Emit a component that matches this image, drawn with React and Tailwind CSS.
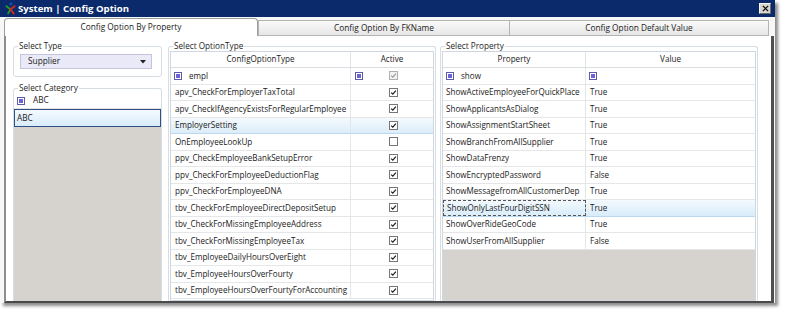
import React from 'react';

const optionTypes = [
  { name: 'apv_CheckForEmployerTaxTotal', on: true },
  { name: 'apv_CheckIfAgencyExistsForRegularEmployee', on: true },
  { name: 'EmployerSetting', on: true, sel: true },
  { name: 'OnEmployeeLookUp', on: false },
  { name: 'ppv_CheckEmployeeBankSetupError', on: true },
  { name: 'ppv_CheckForEmployeeDeductionFlag', on: true },
  { name: 'ppv_CheckForEmployeeDNA', on: true },
  { name: 'tbv_CheckForEmployeeDirectDepositSetup', on: true },
  { name: 'tbv_CheckForMissingEmployeeAddress', on: true },
  { name: 'tbv_CheckForMissingEmployeeTax', on: true },
  { name: 'tbv_EmployeeDailyHoursOverEight', on: true },
  { name: 'tbv_EmployeeHoursOverFourty', on: true },
  { name: 'tbv_EmployeeHoursOverFourtyForAccounting', on: true },
];

const properties = [
  ['ShowActiveEmployeeForQuickPlace', 'True'],
  ['ShowApplicantsAsDialog', 'True'],
  ['ShowAssignmentStartSheet', 'True'],
  ['ShowBranchFromAllSupplier', 'True'],
  ['ShowDataFrenzy', 'True'],
  ['ShowEncryptedPassword', 'False'],
  ['ShowMessagefromAllCustomerDep', 'True'],
  ['ShowOnlyLastFourDigitSSN', 'True', true],
  ['ShowOverRideGeoCode', 'True'],
  ['ShowUserFromAllSupplier', 'False'],
];

function FilterIcon() {
  return (
    <span className="inline-flex items-center justify-center w-[8px] h-[8px] border border-[#5b5ba6] bg-white shrink-0">
      <span className="w-[4px] h-[4px] bg-[#6b63d6]" />
    </span>
  );
}

function Check({ on = true, disabled = false }) {
  return (
    <span
      className={`inline-flex items-center justify-center w-[9px] h-[9px] border ${
        disabled ? 'border-[#b0b0b0] bg-[#f2f2f2]' : 'border-[#767676] bg-white'
      }`}
    >
      {on && (
        <svg viewBox="0 0 9 9" className="w-[7px] h-[7px]">
          <path d="M1.5 4.6 L3.6 6.6 L7.6 2" stroke={disabled ? '#9a9a9a' : '#1a1a1a'} strokeWidth="1.5" fill="none" />
        </svg>
      )}
    </span>
  );
}

function Legend({ children }) {
  return <legend className="ml-[4px] px-[1px] leading-[10px] text-[8.2px] text-[#1e1e1e]">{children}</legend>;
}

export default function App() {
  return (
    <div className="w-[788px] h-[313px] bg-white overflow-hidden font-['Open_Sans',sans-serif] text-[8.1px] text-[#1a1a1a]">
      <div className="w-[775px] h-[303px] flex flex-col bg-white shadow-[3px_3px_3px_rgba(0,0,0,0.45)]">
        {/* title bar */}
        <div className="h-[17px] bg-[#0a2a6b] flex items-center pl-[4px] pr-[4px]">
          <svg viewBox="0 0 14 14" className="w-[13px] h-[13px]">
            <circle cx="7.5" cy="2.2" r="1.6" fill="#1b4fb8" />
            <path d="M2 4 L7 8 L4 13" stroke="#1f9a2a" strokeWidth="2" fill="none" />
            <path d="M12 4 L7 8 L11 13" stroke="#d9261c" strokeWidth="2" fill="none" />
          </svg>
          <span className="ml-[1px] text-white font-bold text-[9.6px] leading-none">System | Config Option</span>
          <div className="ml-auto w-[12px] h-[11px] bg-[#d8d6d0] border border-[#f4f4f4] border-r-[#6c6c6c] border-b-[#6c6c6c] flex items-center justify-center">
            <svg viewBox="0 0 8 8" className="w-[7px] h-[7px]">
              <path d="M1 1 L7 7 M7 1 L1 7" stroke="#111" strokeWidth="1.6" />
            </svg>
          </div>
        </div>

        {/* body */}
        <div className="flex-1 flex flex-col pl-[4px] bg-[#f7f7f7]">
          {/* tabs */}
          <div className="h-[19px] flex items-end">
            <div className="h-[18px] w-[254px] bg-white border border-[#9c9c9c] border-b-0 rounded-t-[4px] flex items-center justify-center text-[8.3px]">
              Config Option By Property
            </div>
            <div className="h-[16px] w-[252px] bg-linear-to-b from-[#fafafa] to-[#e6e6e6] border border-[#b4b4b4] flex items-center justify-center text-[8.3px]">
              Config Option By FKName
            </div>
            <div className="h-[16px] w-[259px] bg-linear-to-b from-[#fafafa] to-[#e6e6e6] border border-[#b4b4b4] border-l-0 flex items-center justify-center text-[8.3px]">
              Config Option Default Value
            </div>
          </div>

          {/* content pane */}
          <div className="flex-1 w-[770px] bg-white border-l-2 border-l-[#8e8e8e] border-r-[3px] border-r-[#505050] border-b-2 border-b-[#4a4a4a] flex pl-[7px] pt-[5px] overflow-hidden">
            {/* left column */}
            <div className="w-[149px] flex flex-col">
              <fieldset className="border border-[#d6dde3] rounded-[3px]">
                <Legend>Select Type</Legend>
                <div className="pl-[6px] pt-[3px] pb-[7px]">
                  <div className="w-[132px] h-[15px] bg-[#e9e9f7] border border-[#c4c4dc] flex items-center pl-[7px] pr-[5px] text-[8.3px]">
                    <span>Supplier</span>
                    <svg viewBox="0 0 6 4" className="ml-auto w-[6px] h-[4px]">
                      <path d="M0 0 H6 L3 3.5 Z" fill="#222" />
                    </svg>
                  </div>
                </div>
              </fieldset>
              <fieldset className="mt-[6px] flex-1 border border-[#d6dde3] border-b-0 rounded-t-[3px] flex flex-col">
                <Legend>Select Category</Legend>
                <div className="flex-1 flex flex-col bg-[#d6d3ce]">
                  <div className="h-[16px] bg-white border-b border-[#e2e2e2] flex items-center pl-[3px] gap-[8px] text-[8.3px]">
                    <FilterIcon />
                    <span>ABC</span>
                  </div>
                  <div className="h-[18px] bg-linear-to-b from-[#f4fafe] to-[#d8ecfa] border border-[#2f4f86] flex items-center pl-[2px] text-[8.3px]">
                    ABC
                  </div>
                </div>
              </fieldset>
            </div>

            {/* middle column */}
            <fieldset className="ml-[6px] w-[268px] border border-[#d6dde3] border-b-0 rounded-t-[3px] flex flex-col">
              <Legend>Select OptionType</Legend>
              <div className="flex-1 mx-[1px] border border-[#cfd6dd] bg-white">
                <div className="h-[16px] flex border-b border-[#d9dee3]">
                  <div className="w-[180px] border-r border-[#dfe3e7] flex items-center justify-center">ConfigOptionType</div>
                  <div className="flex-1 flex items-center justify-center">Active</div>
                </div>
                <div className="h-[16.5px] flex border-b border-[#e4e6e8]">
                  <div className="w-[180px] border-r border-[#e4e6e8] flex items-center pl-[3px] gap-[7px]">
                    <FilterIcon />
                    <span>empl</span>
                  </div>
                  <div className="flex-1 flex items-center pl-[4px]">
                    <FilterIcon />
                    <span className="ml-[26px]">
                      <Check disabled />
                    </span>
                  </div>
                </div>
                {optionTypes.map((r) => (
                  <div
                    key={r.name}
                    className={`h-[16.5px] flex border-b ${
                      r.sel ? 'bg-linear-to-b from-[#f4fafe] to-[#dcedf9] border-[#bcd9ef]' : 'border-[#e4e6e8]'
                    }`}
                  >
                    <div className="w-[180px] border-r border-[#e4e6e8] flex items-center pl-[4px] whitespace-nowrap overflow-hidden">
                      {r.name}
                    </div>
                    <div className="flex-1 flex items-center justify-center pl-[2px]">
                      <Check on={r.on} />
                    </div>
                  </div>
                ))}
              </div>
            </fieldset>

            {/* right column */}
            <fieldset className="ml-[4px] w-[318px] border border-[#d6dde3] border-b-0 rounded-t-[3px] flex flex-col">
              <Legend>Select Property</Legend>
              <div className="flex-1 mx-[1px] border border-[#cfd6dd] bg-[#d6d3ce] flex flex-col">
                <div className="h-[16px] flex border-b border-[#d9dee3] bg-white">
                  <div className="w-[143px] border-r border-[#dfe3e7] flex items-center justify-center">Property</div>
                  <div className="flex-1 flex items-center justify-center">Value</div>
                </div>
                <div className="h-[16.5px] flex border-b border-[#e4e6e8] bg-white">
                  <div className="w-[143px] border-r border-[#e4e6e8] flex items-center pl-[3px] gap-[7px]">
                    <FilterIcon />
                    <span>show</span>
                  </div>
                  <div className="flex-1 flex items-center pl-[3px]">
                    <FilterIcon />
                  </div>
                </div>
                {properties.map(([p, v, sel]) => (
                  <div
                    key={p}
                    className={`h-[16.5px] flex border-b ${
                      sel ? 'bg-linear-to-b from-[#f4fafe] to-[#d8ecfa] border-[#b9d7ee]' : 'bg-white border-[#e4e6e8]'
                    }`}
                  >
                    <div
                      className={`w-[143px] flex items-center pl-[3px] whitespace-nowrap overflow-hidden ${
                        sel ? 'border border-dashed border-[#555]' : 'border-r border-[#e4e6e8]'
                      }`}
                    >
                      {p}
                    </div>
                    <div className="flex-1 flex items-center pl-[4px]">{v}</div>
                  </div>
                ))}
              </div>
            </fieldset>
          </div>
        </div>
      </div>
    </div>
  );
}
